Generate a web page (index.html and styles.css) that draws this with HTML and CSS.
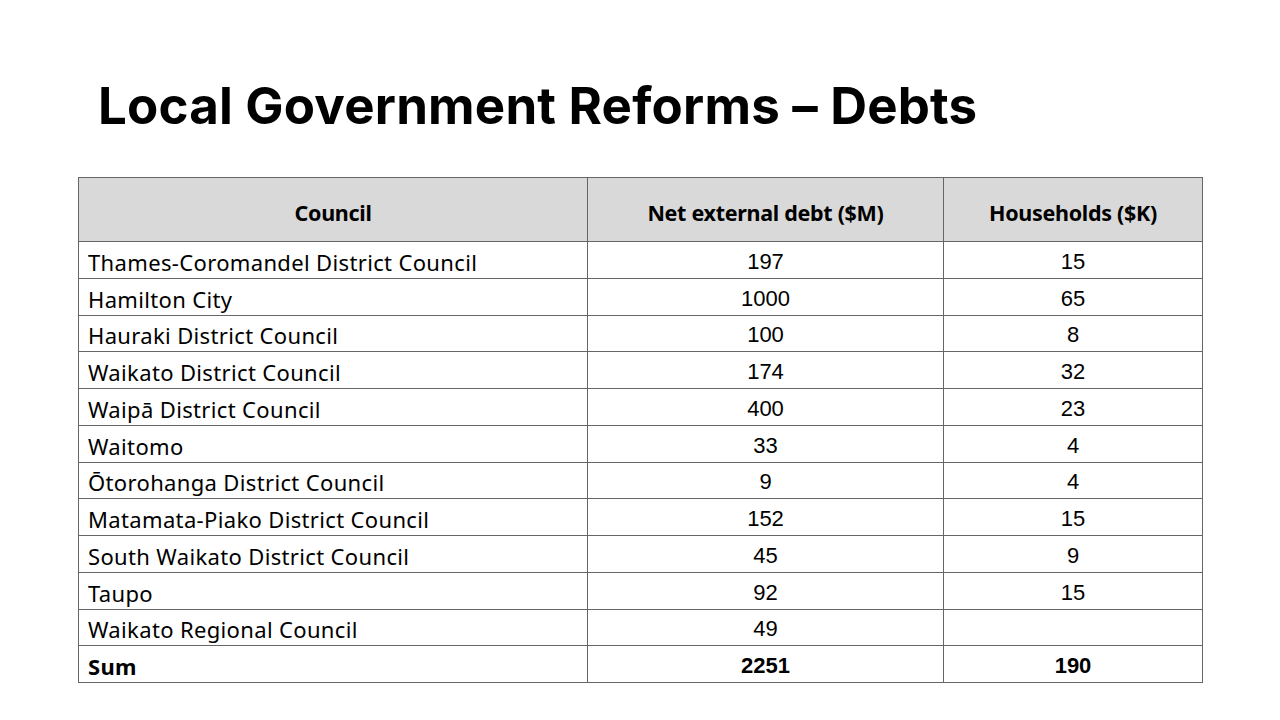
FILE: index.html
```html
<!DOCTYPE html>
<html lang="en">
<head>
<meta charset="utf-8">
<title>Local Government Reforms – Debts</title>
<link rel="stylesheet" href="styles.css">
</head>
<body>
<div class="slide">
  <h1 class="title">Local Government Reforms – Debts</h1>
  <table class="debts">
    <colgroup>
      <col class="c1"><col class="c2"><col class="c3">
    </colgroup>
    <thead>
      <tr><th>Council</th><th>Net external debt ($M)</th><th>Households ($K)</th></tr>
    </thead>
    <tbody>
      <tr><td class="name">Thames-Coromandel District Council</td><td class="num">197</td><td class="num">15</td></tr>
      <tr><td class="name">Hamilton City</td><td class="num">1000</td><td class="num">65</td></tr>
      <tr><td class="name">Hauraki District Council</td><td class="num">100</td><td class="num">8</td></tr>
      <tr><td class="name">Waikato District Council</td><td class="num">174</td><td class="num">32</td></tr>
      <tr><td class="name">Waipā District Council</td><td class="num">400</td><td class="num">23</td></tr>
      <tr><td class="name">Waitomo</td><td class="num">33</td><td class="num">4</td></tr>
      <tr><td class="name">Ōtorohanga District Council</td><td class="num">9</td><td class="num">4</td></tr>
      <tr><td class="name">Matamata-Piako District Council</td><td class="num">152</td><td class="num">15</td></tr>
      <tr><td class="name">South Waikato District Council</td><td class="num">45</td><td class="num">9</td></tr>
      <tr><td class="name">Taupo</td><td class="num">92</td><td class="num">15</td></tr>
      <tr><td class="name">Waikato Regional Council</td><td class="num">49</td><td class="num"></td></tr>
      <tr class="sum"><td class="name">Sum</td><td class="num">2251</td><td class="num">190</td></tr>
    </tbody>
  </table>
</div>
</body>
</html>
```
FILE: styles.css
```css
html, body {
  margin: 0;
  padding: 0;
  background: #ffffff;
}
.slide {
  width: 1280px;
  height: 720px;
  box-sizing: border-box;
  padding: 74px 0 0 78px;
  font-family: "Noto Sans", "Open Sans", sans-serif;
  color: #000;
}
.title {
  margin: 0 0 0 20px;
  font-family: Inter, "Noto Sans", sans-serif;
  font-weight: 700;
  font-size: 51px;
  line-height: 64px;
  letter-spacing: 0.2px;
  height: 103px;
}
.debts {
  border-collapse: collapse;
  width: 1124px;
  table-layout: fixed;
  border: 1.5px solid #222;
}
.c1 { width: 509px; }
.c2 { width: 356px; }
.c3 { width: 259px; }
.debts th {
  background: #d9d9d9;
  height: 64px;
  font-family: "Noto Sans", sans-serif;
  font-weight: 700;
  font-size: 21.5px;
  letter-spacing: -0.3px;
  text-align: center;
  border: 1px solid #666;
  padding: 6px 0 0 0;
  box-sizing: border-box;
}
.debts td {
  height: 36.75px;
  border: 1px solid #666;
  padding: 4px 0 0 0;
  box-sizing: border-box;
  vertical-align: middle;
}
.debts td.name {
  padding-left: 9px;
  font-family: "Noto Sans", sans-serif;
  font-size: 22px;
  letter-spacing: 0.35px;
}
.debts td.num {
  text-align: center;
  font-family: "Liberation Sans", Arial, sans-serif;
  font-size: 22px;
}
.debts tr.sum td {
  font-weight: 700;
  border-top: 1.5px solid #333;
}
```
